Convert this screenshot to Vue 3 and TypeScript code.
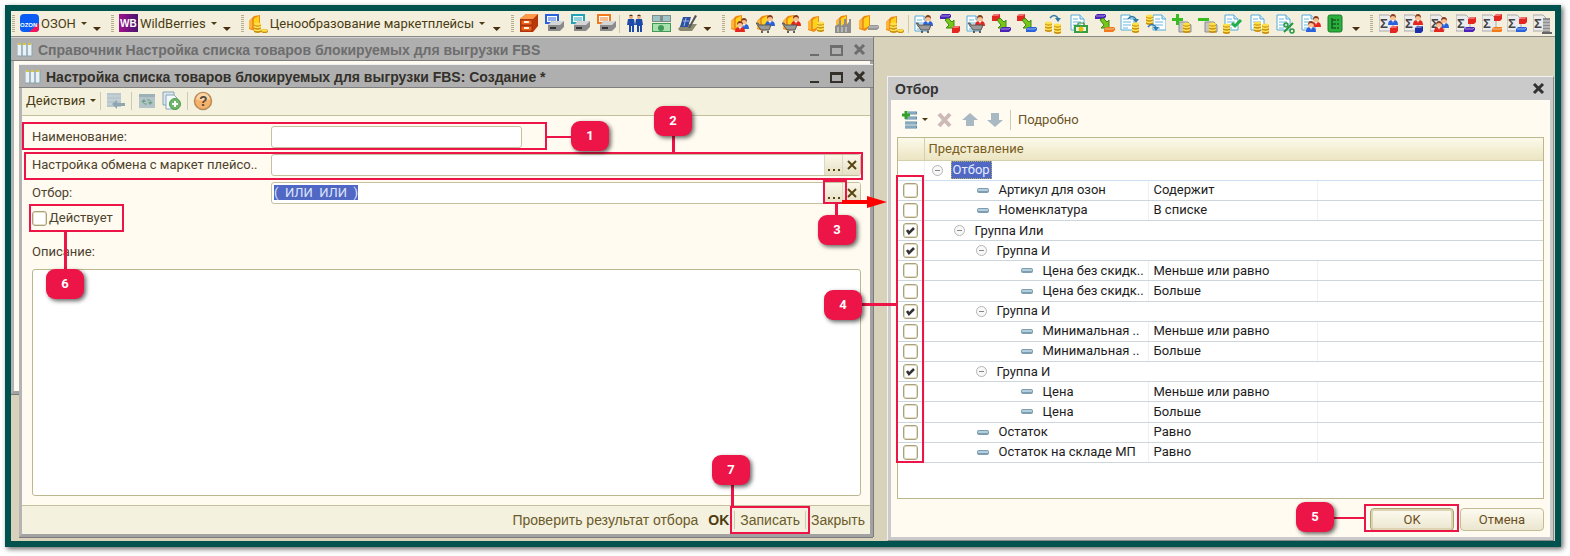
<script setup lang="ts">
import { ref } from 'vue'

// One piece of a toolbar icon: symbol name, x, y, optional colour name
type Part = [string, number, number, string?]
type Tool = { title: string; parts: Part[] } | 'sep'

const serviceTools: Tool[] = [
  { title: 'Архив', parts: [['cabinet', 0, 0]] },
  { title: 'Печать формы', parts: [['printer', 0, 0, 'blue']] },
  { title: 'Печать документа', parts: [['printer', 0, 0, 'teal']] },
  { title: 'Печать этикеток', parts: [['printer', 0, 0, 'orange']] },
  'sep',
  { title: 'Контрагенты', parts: [['standing', 1, 0], ['standing', 9, 0]] },
  { title: 'Касса', parts: [['money', 0, 0]] },
  { title: 'Отчётность', parts: [['pen', 0, 0]] },
]

const tradeTools: Tool[] = [
  { title: 'Товары и покупатели', parts: [['box', 1, 0], ['man', 9, 4, 'blue'], ['man', 5, 7, 'red']] },
  { title: 'Заказ поставщику', parts: [['box', 1, 0], ['man', 9, 1, 'blue'], ['cart', 0, 9]] },
  { title: 'Заказ покупателя', parts: [['box', 1, 0], ['man', 9, 1, 'red'], ['cart', 0, 9]] },
  { title: 'Цены товаров', parts: [['box', 0, 1], ['coins', 9, 7]] },
  { title: 'Склад', parts: [['box', 3, 0], ['factory', 2, 4]] },
  { title: 'Отгрузка', parts: [['box', 0, 0], ['bar', 9, 11, 'grey']] },
  { title: 'Себестоимость', parts: [['box', 1, 1], ['coins', 5, 8], ['coin', 12, 15]] },
  'sep',
  { title: 'Документ закупки', parts: [['sheet', 0, 1], ['man', 9, 1, 'blue'], ['cart', 2, 9]] },
  { title: 'Перемещение', parts: [['bar', 0, 0, 'purple'], ['arrow', 4, 4], ['cube', 12, 12, 'red']] },
  { title: 'Документ продажи', parts: [['sheet', 0, 1], ['man', 9, 1, 'red'], ['cart', 2, 9]] },
  { title: 'Поступление', parts: [['cube', 0, 0, 'red'], ['arrow', 4, 4], ['bar', 8, 13, 'purple']] },
  { title: 'Списание', parts: [['cube', 0, 0, 'red'], ['arrow', 4, 4], ['bar', 9, 13, 'blue']] },
  { title: 'Пересчёт', parts: [['coins', 2, 7], ['coins', 11, 9], ['turn', 7, 0]] },
  { title: 'Инкассация', parts: [['sheet', 1, 0, 'grey'], ['case', 5, 8]] },
  { title: 'Выгрузка', parts: [['bar', 0, 0, 'purple'], ['arrow', 4, 4], ['bar', 9, 13, 'orange']] },
  { title: 'Оплата', parts: [['sheet', 0, 0], ['turn', 8, 1], ['coins', 12, 8]] },
  { title: 'Возврат оплаты', parts: [['sheet', 6, 0], ['coins', 0, 0], ['turn', 2, 9]] },
  { title: 'Приход', parts: [['slab', 7, 6], ['coins', 11, 8], ['plus', 0, 0]] },
  { title: 'Расход', parts: [['slab', 7, 6], ['coins', 11, 8], ['minus', 0, 0]] },
  { title: 'Проведение', parts: [['sheet', 1, 0], ['coins', 0, 9], ['check', 9, 5]] },
  { title: 'Ведомость', parts: [['sheet', 1, 0], ['coins', 5, 7], ['coins', 13, 9]] },
  { title: 'Скидки', parts: [['sheet', 1, 0], ['percent', 8, 8]] },
  { title: 'Сотрудники', parts: [['sheet', 0, 0], ['man', 10, 2, 'red'], ['man', 5, 7, 'blue']] },
  { title: 'Структура', parts: [['book', 2, 1]] },
]

const reportTools: Tool[] = [
  { title: 'Итоги закупок', parts: [['sigma', 0, 1], ['man', 9, 0, 'blue'], ['cube', 11, 12, 'red']] },
  { title: 'Итоги продаж', parts: [['sigma', 0, 1], ['man', 9, 0, 'red'], ['cube', 11, 12, 'navy']] },
  { title: 'Итоги по персоналу', parts: [['sigma', 0, 1], ['man', 9, 3, 'blue'], ['man', 4, 7, 'red']] },
  { title: 'Итоги склада', parts: [['sigma', 0, 1], ['cube', 12, 3, 'red'], ['bar', 8, 13, 'purple']] },
  { title: 'Итоги отгрузок', parts: [['sigma', 0, 1], ['cube', 12, 0, 'red'], ['bar', 10, 13, 'orange']] },
  { title: 'Итоги возвратов', parts: [['sigma', 0, 1], ['cube', 12, 3, 'red'], ['bar', 9, 13, 'blue']] },
  { title: 'Итоги по хранению', parts: [['sigma', 0, 1], ['rack', 9, 4]] },
]

const iconGroups = [
  { name: 'Сервис', tools: serviceTools, more: true },
  { name: 'Торговля', tools: tradeTools, more: true },
  { name: 'Отчёты', tools: reportTools, more: false },
]

type Row = { kind: 'root' | 'group' | 'item'; level: number; text: string; cond?: string; on?: boolean }
const rows = ref<Row[]>([
  { kind: 'root', level: 0, text: 'Отбор' },
  { kind: 'item', level: 1, text: 'Артикул для озон', cond: 'Содержит', on: false },
  { kind: 'item', level: 1, text: 'Номенклатура', cond: 'В списке', on: false },
  { kind: 'group', level: 1, text: 'Группа Или', on: true },
  { kind: 'group', level: 2, text: 'Группа И', on: true },
  { kind: 'item', level: 3, text: 'Цена без скидк..', cond: 'Меньше или равно', on: false },
  { kind: 'item', level: 3, text: 'Цена без скидк..', cond: 'Больше', on: false },
  { kind: 'group', level: 2, text: 'Группа И', on: true },
  { kind: 'item', level: 3, text: 'Минимальная ..', cond: 'Меньше или равно', on: false },
  { kind: 'item', level: 3, text: 'Минимальная ..', cond: 'Больше', on: false },
  { kind: 'group', level: 2, text: 'Группа И', on: true },
  { kind: 'item', level: 3, text: 'Цена', cond: 'Меньше или равно', on: false },
  { kind: 'item', level: 3, text: 'Цена', cond: 'Больше', on: false },
  { kind: 'item', level: 1, text: 'Остаток', cond: 'Равно', on: false },
  { kind: 'item', level: 1, text: 'Остаток на складе МП', cond: 'Равно', on: false },
])

const title = ref('')
const exchange = ref('')
const active = ref(false)
const note = ref('')
</script>

<template>
  <div class="page">
    <svg class="symbols" width="0" height="0" aria-hidden="true">
      <defs>
        <g id="box">
          <path d="M0 7 5 2 11 1v12l-5 4-6-2z" fill="#f08a10" />
          <path d="M4 5 10 2v10l-6 3z" fill="#ffd21c" />
          <path d="M0 7 4 4v11l-4-1z" fill="#ffb53a" />
          <path d="M4 4v11" stroke="#d9660a" />
        </g>
        <g id="man">
          <path d="M0 11q0-5 4-5h2q4 0 4 5z" fill="currentColor" />
          <circle cx="5" cy="4" r="3" fill="#f6c193" />
          <path d="M2 4q0-4 3-4t3 4q-1-2-3-2T2 4z" fill="#8a3a1c" />
          <path d="M4 6h2l-1 3z" fill="#fff" />
        </g>
        <g id="cart">
          <path d="M0 0h2l1 2h12l-2 5H5z" fill="#9a9a9a" stroke="#555" />
          <circle cx="6" cy="9" r="1" fill="#333" /><circle cx="12" cy="9" r="1" fill="#333" />
        </g>
        <g id="coins">
          <path d="M0 2h7v8q-3 2-7 0z" fill="#c98e08" />
          <ellipse cx="3.500" cy="2" rx="3.500" ry="1.500" fill="#ffe04a" />
          <path d="M0 4.500q3.500 2 7 0M0 7.500q3.500 2 7 0" fill="none" stroke="#ffe45a" stroke-width="1.500" />
        </g>
        <g id="coin">
          <ellipse cx="3.500" cy="2" rx="3.500" ry="2" fill="#c98e08" /><ellipse cx="3.500" cy="1.500" rx="3" ry="1.200" fill="#ffe04a" />
        </g>
        <g id="factory">
          <path d="M0 15V8l4-2V2h2v6l3-2V1h2v6l3-3V1h2v14z" fill="#8d8d8d" />
          <path d="M3 9v5M7 9v5M11 9v5" stroke="#ddd" />
        </g>
        <g id="bar">
          <path d="M0 2 2 0h9v3L9 5H0z" fill="currentColor" />
          <path d="M1 2h8l2-2" fill="none" stroke="#fff" stroke-opacity=".5" />
        </g>
        <g id="cube">
          <path d="M0 2 2 0h6v5L6 7H0z" fill="currentColor" />
          <path d="M0 2 2 0h6L6 2z" fill="#fff" opacity=".35" />
        </g>
        <g id="arrow">
          <path d="M1 2 4 0l4 4 2-2v8H2l3-3z" fill="#78c51c" stroke="#3d8a10" />
        </g>
        <g id="sheet">
          <path d="M1 1h9l4 4v11H1z" fill="#fff" stroke="#57a9d8" />
          <path d="M10 1v4h4" fill="#cfeafa" stroke="#57a9d8" />
          <path d="M3 5h5M3 8h8M3 11h8M3 14h5" stroke="#67b7e0" />
        </g>
        <g id="turn">
          <path d="M0 4q4-5 8 0" fill="none" stroke="#2f79a8" stroke-width="1.500" />
          <path d="M5 4h6L8 8z" fill="#2f79a8" />
        </g>
        <g id="case">
          <path d="M0 3h14v8H0z" fill="#35a043" /><path d="M4 3V1h6v2" fill="none" stroke="#2a7d34" />
          <path d="M2 5h10v4H2z" fill="#e9f7df" /><circle cx="7" cy="7" r="2.500" fill="#f0b912" />
        </g>
        <g id="slab"><path d="M0 2h9l3 3v7H0z" fill="#c5c5c5" stroke="#8d8d8d" /></g>
        <g id="plus"><path d="M4 0h3v4h4v3H7v4H4V7H0V4h4z" fill="#35bd22" /></g>
        <g id="minus"><path d="M0 4h11v3H0z" fill="#35bd22" /></g>
        <g id="check"><path d="M0 4l3 3 6-6" fill="none" stroke="#1fae45" stroke-width="3" /></g>
        <g id="percent">
          <path d="M1 10 10 1" stroke="#26973b" stroke-width="2" />
          <circle cx="3" cy="3" r="2" fill="none" stroke="#26973b" stroke-width="1.500" />
          <circle cx="9" cy="9" r="2" fill="none" stroke="#26973b" stroke-width="1.500" />
        </g>
        <g id="book">
          <rect width="14" height="17" rx="2" fill="#2cae3d" stroke="#1a7d2a" />
          <path d="M4 3v10h4M4 5h4M4 9h4M9 5h2M9 9h2M9 13h2" fill="none" stroke="#145f22" stroke-width="1.500" />
        </g>
        <g id="sigma">
          <path d="M0 0h10l4 4v12H0z" fill="#ececec" stroke="#aaa" />
          <text x="1" y="13" class="sigma">Σ</text>
        </g>
        <g id="rack">
          <path d="M1 0h7v15H1z" fill="#8d8d8d" /><path d="M0 15h10" stroke="#666" stroke-width="2" />
          <path d="M1 3h7M1 6h7M1 9h7M1 12h7" stroke="#dedede" />
        </g>
        <g id="cabinet">
          <path d="M1 5 7 0h12v12l-5 6H1z" fill="#b8380c" />
          <path d="M1 5 7 0h12l-5 5z" fill="#ff9a4a" />
          <path d="M2 6h11v5H2zM2 12h11v5H2z" fill="#f0641e" stroke="#a5310a" />
          <path d="M5 8h5M5 14h5" stroke="#fff3d8" stroke-width="2" />
        </g>
        <g id="printer">
          <path d="M1 1h12v8H1z" fill="#fff" stroke="currentColor" stroke-width="2" />
          <path d="M3 4h8M3 6h8" stroke="currentColor" />
          <path d="M3 11 7 7h12v6l-4 4H3z" fill="#8b8b8b" />
          <path d="M3 11 7 7h12l-4 4z" fill="#d5d5d5" />
          <path d="M5 14h6" stroke="#333" stroke-width="2" />
        </g>
        <g id="standing">
          <circle cx="4" cy="3" r="2" fill="#e9a77a" /><path d="M2 2q2-3 4 0z" fill="#5a2c14" />
          <path d="M1 5h6l1 6H7v7H5v-6H4v6H2v-7H0z" fill="#1b4aa8" />
        </g>
        <g id="money">
          <path d="M0 1h19v7H0z" fill="#7d8f8a" /><path d="M1 2h7v5H1zM11 2h7v5h-7z" fill="#9fc4c8" />
          <path d="M0 9h19v9H0z" fill="#3f9a58" /><path d="M1 10h17v7H1z" fill="#a9e0ae" /><ellipse cx="9" cy="14" rx="3" ry="3" fill="#3f9a58" />
        </g>
        <g id="pen">
          <path d="M0 15 4 10h15l-5 7H2z" fill="#8a8a70" /><path d="M2 13 5 3h8l-3 10z" fill="#2c4fa0" />
          <path d="M5 7h6M8 4l-2 8" stroke="#9fb8f0" /><path d="M10 14 17 1l2 1-7 12z" fill="#555" />
        </g>
      </defs>
    </svg>

    <div class="frame">
      <nav class="topbar" aria-label="Панели инструментов">
        <div class="bargroup">
          <i class="grip"></i>
          <button class="textbtn">
            <svg width="20" height="19" viewBox="0 0 20 19" aria-hidden="true">
              <rect width="19" height="18" rx="4" fill="#0b5cf5" />
              <path d="M9 18 19 9v6q0 3-4 3z" fill="#f5145a" />
              <text x="0" y="13" class="ozon">OZON</text>
            </svg>
            <span>ОЗОН</span><i class="caret"></i>
          </button>
          <button class="more" title="Ещё"></button>
        </div>
        <div class="bargroup">
          <i class="grip"></i>
          <button class="textbtn">
            <svg width="20" height="19" viewBox="0 0 20 19" aria-hidden="true">
              <defs>
                <linearGradient id="wb"><stop stop-color="#a0128c" /><stop offset="1" stop-color="#4a1470" /></linearGradient>
              </defs>
              <rect width="19" height="18" fill="url(#wb)" />
              <text x="1" y="13" class="wb">WB</text>
            </svg>
            <span>WildBerries</span><i class="caret"></i>
          </button>
          <button class="more" title="Ещё"></button>
        </div>
        <div class="bargroup">
          <i class="grip"></i>
          <button class="textbtn">
            <svg width="20" height="20" viewBox="0 0 20 20" aria-hidden="true">
              <use href="#box" /><use href="#coins" x="5" y="8" /><use href="#coin" x="12" y="15" />
            </svg>
            <span>Ценообразование маркетплейсы</span><i class="caret"></i>
          </button>
          <button class="more" title="Ещё"></button>
        </div>
        <div v-for="g in iconGroups" :key="g.name" class="bargroup spread" role="group" :aria-label="g.name">
          <i class="grip"></i>
          <template v-for="(t, i) in g.tools" :key="i">
            <i v-if="t === 'sep'" class="barsep"></i>
            <button v-else class="iconbtn" :title="t.title">
              <svg width="20" height="20" viewBox="0 0 20 20" aria-hidden="true">
                <use v-for="(p, k) in t.parts" :key="k" :href="'#' + p[0]" :x="p[1]" :y="p[2]" :class="p[3]" />
              </svg>
            </button>
          </template>
          <button v-if="g.more" class="more" title="Ещё"></button>
        </div>
      </nav>

      <main class="desktop">
        <div class="stack">
          <section class="win back">
            <header class="wintitle">
              <svg class="tableicon" width="16" height="14" viewBox="0 0 16 14" aria-hidden="true">
                <path d="M0 0h5v13H0zM5 0h5v13H5zM10 0h5v13h-5z" fill="#e9f3f7" stroke="#8aa3b0" /><path d="M1 1h3M6 1h3M11 1h3" stroke="#d8c342" stroke-width="2" />
              </svg>
              <h2>Справочник Настройка списка товаров блокируемых для выгрузки FBS</h2>
              <div class="winctl">
                <button title="Свернуть"><svg width="14" height="12" viewBox="0 0 14 12"><path d="M3 11h9" /></svg></button>
                <button title="Развернуть"><svg width="14" height="12" viewBox="0 0 14 12"><path d="M1 2h11v9H1zM1 3h11" /></svg></button>
                <button title="Закрыть"><svg width="14" height="12" viewBox="0 0 14 12"><path class="cross" d="M2 1l9 9M11 1l-9 9" /></svg></button>
              </div>
            </header>
            <div class="blank"></div>
          </section>

          <section class="win front">
            <header class="wintitle">
              <svg class="tableicon" width="16" height="14" viewBox="0 0 16 14" aria-hidden="true">
                <path d="M0 0h5v13H0zM5 0h5v13H5zM10 0h5v13h-5z" fill="#e9f3f7" stroke="#8aa3b0" /><path d="M1 1h3M6 1h3M11 1h3" stroke="#d8c342" stroke-width="2" />
              </svg>
              <h2>Настройка списка товаров блокируемых для выгрузки FBS: Создание *</h2>
              <div class="winctl">
                <button title="Свернуть"><svg width="14" height="12" viewBox="0 0 14 12"><path d="M3 11h9" /></svg></button>
                <button title="Развернуть"><svg width="14" height="12" viewBox="0 0 14 12"><path d="M1 2h11v9H1zM1 3h11" /></svg></button>
                <button title="Закрыть"><svg width="14" height="12" viewBox="0 0 14 12"><path class="cross" d="M2 1l9 9M11 1l-9 9" /></svg></button>
              </div>
            </header>

            <div class="wintools">
              <button class="textbtn"><span>Действия</span><i class="caret"></i></button>
              <i class="barsep"></i>
              <button class="iconbtn" title="Найти в списке">
                <svg width="20" height="18" viewBox="0 0 20 18">
                  <path d="M1 1h14v14H1z" fill="#b9c6cd" /><path d="M1 4h14M1 8h14M1 12h14" stroke="#cfd8dc" />
                  <path d="M6 12l5-4v3h8v3h-8v3z" fill="#8fa5b0" />
                </svg>
              </button>
              <i class="barsep"></i>
              <button class="iconbtn" title="Обновить">
                <svg width="20" height="18" viewBox="0 0 20 18">
                  <path d="M2 2h16v14H2z" fill="#b3c3c9" /><path d="M2 2h16v3H2z" fill="#9db0b8" />
                  <path d="M4 10l3-3 2 3zM16 10l-3 3-2-3z" fill="#6fa282" /><path d="M6 10q1 3 4 2M14 10q-1-3-4-2" fill="none" stroke="#6fa282" />
                </svg>
              </button>
              <button class="iconbtn" title="Скопировать">
                <svg width="20" height="19" viewBox="0 0 20 19">
                  <path d="M1 1h11v13H1z" fill="#dbe7ee" stroke="#8ba5b5" /><path d="M4 4h8l3 3v11H4z" fill="#f3f8fb" stroke="#8ba5b5" />
                  <circle cx="13" cy="13" r="5.500" fill="#6fb869" stroke="#4f9a4b" /><path d="M10 13h6M13 10v6" stroke="#fff" stroke-width="2" />
                </svg>
              </button>
              <i class="barsep"></i>
              <button class="iconbtn" title="Справка">
                <svg width="20" height="20" viewBox="0 0 20 20">
                  <circle cx="10" cy="10" r="8.500" fill="#f6b26a" stroke="#b98a5a" stroke-width="1.500" /><path d="M3 8q2-6 7-6t7 6q-7 3-14 0z" fill="#fbd7a8" />
                  <text x="6" y="15" class="ask">?</text>
                </svg>
              </button>
            </div>

            <form class="form" @submit.prevent>
              <div class="field">
                <label for="f-name">Наименование:</label>
                <div class="box short"><input id="f-name" v-model="title" type="text" /></div>
              </div>
              <div class="field">
                <label for="f-exchange">Настройка обмена с маркет плейсо..</label>
                <div class="box">
                  <input id="f-exchange" v-model="exchange" type="text" />
                  <button type="button" class="inbtn dots" title="Выбрать"><i></i><i></i><i></i></button>
                  <button type="button" class="inbtn" title="Очистить"><svg width="10" height="10" viewBox="0 0 10 10"><path d="M1 1l8 8M9 1L1 9" /></svg></button>
                </div>
              </div>
              <div class="field">
                <label id="f-filter">Отбор:</label>
                <div class="box">
                  <output class="value" aria-labelledby="f-filter"><mark>(&nbsp; ИЛИ&nbsp; ИЛИ&nbsp; )</mark></output>
                  <button type="button" class="inbtn dots" title="Открыть отбор"><i></i><i></i><i></i></button>
                  <button type="button" class="inbtn" title="Очистить"><svg width="10" height="10" viewBox="0 0 10 10"><path d="M1 1l8 8M9 1L1 9" /></svg></button>
                </div>
              </div>
              <label class="active"><input v-model="active" type="checkbox" class="tick" /><span>Действует</span></label>
              <label class="notelabel" for="f-note">Описание:</label>
              <textarea id="f-note" v-model="note"></textarea>
            </form>

            <footer class="winfoot">
              <button>Проверить результат отбора</button>
              <button class="main">OK</button>
              <i class="barsep"></i>
              <button>Записать</button>
              <i class="barsep"></i>
              <button>Закрыть</button>
            </footer>

            <div class="ring r1"></div><i class="wire w1"></i><b class="badge b1">1</b>
            <div class="ring r2"></div><i class="wire w2"></i><b class="badge b2">2</b>
            <div class="ring r3"></div><i class="wire w3"></i><b class="badge b3">3</b>
            <svg class="pointer" width="45" height="12" viewBox="0 0 45 12" aria-hidden="true"><path d="M0 4h25V0l20 6-20 6V8H0z" fill="#f00" /></svg>
            <div class="ring r6"></div><i class="wire w6"></i><b class="badge b6">6</b>
            <div class="ring r7"></div><i class="wire w7"></i><b class="badge b7">7</b>
          </section>
        </div>

        <section class="dialog">
          <header class="dlgtitle">
            <h2>Отбор</h2>
            <button title="Закрыть"><svg width="14" height="12" viewBox="0 0 14 12"><path class="cross" d="M2 1l9 9M11 1l-9 9" /></svg></button>
          </header>
          <div class="dlgbody">
            <div class="dlgtools">
              <button class="iconbtn wide" title="Добавить">
                <svg width="18" height="18" viewBox="0 0 18 18">
                  <path d="M7 2h9M4 7h12M4 12h12M4 16h12" stroke="#5f8ba8" stroke-width="3" /><path d="M7 2h8M4 7h11M4 12h11M4 16h11" stroke="#a9c8da" />
                  <path d="M1 4h8M5 0v8" stroke="#35a02b" stroke-width="3" />
                </svg>
                <i class="caret"></i>
              </button>
              <button class="iconbtn" title="Удалить"><svg width="16" height="16" viewBox="0 0 16 16"><path d="M2 2l11 12M13 2L2 14" stroke="#ccb9b9" stroke-width="4" /></svg></button>
              <button class="iconbtn" title="Вверх"><svg width="16" height="16" viewBox="0 0 16 16"><path d="M8 1l8 7h-4v6H4V8H0z" fill="#a9b9c3" /></svg></button>
              <button class="iconbtn" title="Вниз"><svg width="16" height="16" viewBox="0 0 16 16"><path d="M8 15l8-7h-4V1H4v7H0z" fill="#a9b9c3" /></svg></button>
              <i class="barsep"></i>
              <button class="plain">Подробно</button>
            </div>
            <div class="tablebox">
              <table>
                <colgroup><col class="c1" /><col class="c2" /><col class="c3" /><col /></colgroup>
                <thead><tr><th></th><th colspan="3">Представление</th></tr></thead>
                <tbody>
                  <tr v-for="(r, i) in rows" :key="i" :class="r.kind">
                    <td class="tickcell"><input v-if="r.kind !== 'root'" v-model="r.on" type="checkbox" class="tick" :aria-label="r.text" /></td>
                    <td :colspan="r.kind === 'item' ? 1 : 3">
                      <div class="node" :class="'lv' + r.level">
                        <i v-if="r.kind === 'item'" class="dash"></i>
                        <button v-else class="fold" title="Свернуть ветвь"></button>
                        <span>{{ r.text }}</span>
                      </div>
                    </td>
                    <template v-if="r.kind === 'item'"><td class="cond">{{ r.cond }}</td><td></td></template>
                  </tr>
                </tbody>
              </table>
            </div>
            <div class="dlgfoot">
              <button class="push default">OK</button>
              <button class="push">Отмена</button>
            </div>
          </div>
          <div class="ring r4"></div><i class="wire w4"></i><b class="badge b4">4</b>
          <div class="ring r5"></div><i class="wire w5"></i><b class="badge b5">5</b>
        </section>
      </main>
    </div>
  </div>
</template>

<style>
body { margin: 0; background: #fff; }
</style>

<style scoped>
* { box-sizing: border-box; }
.page { display: flex; min-height: 100vh; padding: 5px 9px 9px 5px; font: 13px/16px Roboto, "Liberation Sans", sans-serif; color: #4a4030; }
.symbols { position: absolute; }
button { margin: 0; padding: 0; border: 0; background: none; color: inherit; font: inherit; white-space: nowrap; }
h2 { margin: 0; font: bold 14px/16px "Liberation Sans", sans-serif; white-space: nowrap; }
svg { display: block; flex: none; }
.frame { display: flex; flex: 1; flex-direction: column; min-width: 0; border: 6px solid #00524f; background: #d8d2bb; box-shadow: 2px 2px 5px rgba(0, 0, 0, .6); }

/* top toolbars */
.topbar { display: grid; grid-template-columns: 99fr 130fr 270fr 211fr 649fr 185fr; height: 26px; padding: 0 0 0 1px; border-bottom: 1px solid #8c8c86; background: #f3efdc; }
.bargroup { display: flex; align-items: center; min-width: 0; padding-right: 10px; }
.bargroup .textbtn { margin-left: 5px; }
.bargroup .textbtn + .more { margin-left: auto; }
.spread { justify-content: space-between; }
.bargroup:last-child { padding-right: 2px; }
.grip { flex: none; width: 3px; height: 17px; background: repeating-linear-gradient(#b5ad8c 0 1px, #f3efdc 1px 2px); }
.textbtn { display: flex; align-items: center; gap: 1px; color: #4a3c14; }
.caret { flex: none; width: 0; margin-left: 4px; border: 3px solid transparent; border-top-color: #4a3c14; border-bottom: 0; }
.more { flex: none; align-self: flex-end; width: 8px; height: 4px; margin-bottom: 5px; background: #4a3010; clip-path: polygon(0 0, 100% 0, 50% 100%); }
.iconbtn { display: flex; align-items: center; flex: none; }
.barsep { flex: none; width: 1px; height: 18px; background: #cfc9ae; }
.spread .barsep { margin: 0 0 0 -3px; }
.ozon { font: bold 6px "Liberation Sans", sans-serif; fill: #fff; }
.wb { font: bold 10px "Liberation Sans", sans-serif; fill: #fff; }
.sigma { font: bold 13px "Liberation Sans", sans-serif; fill: #444; }
.ask { font: bold 14px "Liberation Sans", sans-serif; fill: #5a4a40; }
.red { color: #e3261f; }
.blue { color: #2a62dc; }
.navy { color: #1b2fa8; }
.purple { color: #4a22b8; }
.orange { color: #f07a1c; }
.teal { color: #22a4b8; }
.grey { color: #969696; }

/* windows */
.desktop { display: grid; flex: 1; grid-template-columns: 862fr 667fr; gap: 14px; padding-right: 1px; }
.stack { display: grid; min-width: 0; }
.win { position: relative; display: flex; flex-direction: column; grid-area: 1 / 1; min-width: 0; border: 3px solid #a2a2a2; border-top: 0; border-left-color: #b4b4b4; box-shadow: inset 1px 0 #858585, 0 1px #7b7b7b, 1px 0 #7b7b7b; background: #fffbf0; }
.back { margin-bottom: 147px; color: #6d6d6d; }
.front { margin: 27px 0 4px 8px; color: #33302a; }
.wintitle { display: flex; align-items: center; height: 24px; margin: 0 -3px; padding: 1px 6px 0 6px; border-top: 1px solid #d2d2d2; border-bottom: 1px solid #7f7f7f; background: #afafaf; }
.front .wintitle { border-top-color: #eee; }
.tableicon { margin-right: 5px; }
.winctl { display: flex; gap: 9px; margin-left: auto; }
.winctl path, .dlgtitle path { fill: none; stroke: currentColor; stroke-width: 2; }
.winctl .cross, .dlgtitle .cross { stroke-width: 3; }
.blank { flex: 1; background: #fffbf0; }
.wintools { display: flex; align-items: center; gap: 5px; height: 28px; padding: 0 0 2px 4px; border-bottom: 1px solid #c6bf9c; background: #f4f1de; }
.wintools .textbtn { margin-right: -1px; }
.form { display: flex; flex: 1; flex-direction: column; gap: 6px; padding: 10px 9px 9px 10px; background: #fffbf0; color: #4d422e; }
.field { display: grid; grid-template-columns: 239px 1fr; align-items: center; }
.box { display: flex; height: 22px; overflow: hidden; border: 1px solid #c6c0a0; border-radius: 3px; background: #fff; }
.short { width: 251px; }
.box input { flex: 1; min-width: 0; padding: 0 4px; border: 0; background: none; font: inherit; outline: 0; }
.value { flex: 1; padding: 2px; }
mark { display: inline-block; background: #5068c4; color: #dfe5fb; font: 13px/15px Roboto, sans-serif; }
.inbtn { display: flex; align-items: center; justify-content: center; flex: none; width: 18px; border-left: 1px solid #dcd7bd; background: linear-gradient(#fbf8ea, #e5dfc4); }
.inbtn path { fill: none; stroke: #5a4510; stroke-width: 2; }
.dots { align-items: flex-end; gap: 3px; padding-bottom: 4px; }
.dots i { width: 2px; height: 2px; background: #5a4510; }
.active { display: flex; align-items: center; gap: 2px; align-self: flex-start; }
.tick { flex: none; width: 15px; height: 15px; margin: 0; border: 1px solid #aaa17c; border-radius: 3px; background: #fff; box-shadow: 0 0 0 1px #e3dec8 inset; appearance: none; }
.tick:checked { background: #fff url("data:image/svg+xml,%3Csvg xmlns='http://www.w3.org/2000/svg' viewBox='0 0 13 13'%3E%3Cpath d='M3 6l2 3 5-5' fill='none' stroke='%23333' stroke-width='2.500'/%3E%3C/svg%3E") center / 13px; }
.notelabel { margin: 12px 0 3px; }
textarea { flex: 1; min-height: 120px; resize: none; border: 1px solid #bdb78f; border-radius: 3px; background: #fff; font: inherit; outline: 0; }
.winfoot { display: flex; align-items: center; justify-content: flex-end; gap: 5px; height: 29px; padding-right: 5px; border-top: 1px solid #c6bf9c; background: #f4f1de; color: #6b5a2a; font: 14px/16px "Liberation Sans", sans-serif; }
.main { margin-left: 5px; color: #4a3c10; font-weight: bold; }

/* filter dialog */
.dialog { position: relative; display: flex; flex-direction: column; min-width: 0; margin-top: 39px; border: 1px solid #f2f2f2; border-right-color: #8a8a8a; border-bottom-color: #8a8a8a; background: #cacaca; }
.dlgtitle { display: flex; align-items: center; justify-content: space-between; height: 23px; padding: 0 7px; color: #333; }
.dlgbody { display: flex; flex: 1; flex-direction: column; margin: 0 3px 3px; padding: 2px 6px 6px; background: #fffbf0; }
.dlgtools { display: flex; align-items: center; gap: 9px; height: 35px; padding-left: 4px; color: #6b5426; }
.wide .caret { margin-left: 3px; }
.dlgtools .barsep { height: 20px; margin: 0 -2px; }
.tablebox { flex: 1; border: 1px solid #bdb78f; background: #fff; }
table { width: 100%; height: 325px; border-collapse: collapse; table-layout: fixed; color: #1c1c22; }
.c1 { width: 26px; }
.c2 { width: 224px; }
.c3 { width: 169px; }
th { height: 22px; padding: 0 4px; border: 1px solid #d6cfac; border-width: 0 0 1px 1px; background: linear-gradient(#fbf9ea, #ece5c2); color: #7a5c20; font-weight: normal; text-align: left; }
th:first-child { border-left: 0; }
td { height: 20px; padding: 0; border-bottom: 1px solid #cdd6da; }
td + td { border-left: 1px solid #eef0f2; }
.root td { border-bottom-color: #cfe0f2; }
.tickcell { text-align: center; line-height: 0; }
.tickcell .tick { vertical-align: middle; }
.node { display: flex; align-items: center; overflow: hidden; white-space: nowrap; line-height: 18px; }
.cond { padding-left: 5px; }
.lv0 { padding-left: 7px; }
.lv1 { padding-left: 29px; }
.lv2 { padding-left: 51px; }
.item .lv1 { padding-left: 52px; }
.item .lv3 { padding-left: 96px; }
.fold { position: relative; flex: none; width: 11px; height: 11px; margin-right: 10px; border: 1px solid #b5b5b5; border-radius: 50%; background: linear-gradient(#888, #888) center / 5px 1px no-repeat #f8f8f8; }
.lv0 .fold { margin-right: 8px; }
.lv0 span { padding: 0 2px; outline: 1px dotted #b5b060; outline-offset: -1px; background: #5068c4; color: #e6ebff; }
.dash { flex: none; width: 12px; height: 5px; margin-right: 10px; border: 1px solid #7d9db1; border-bottom-width: 2px; border-radius: 2px; background: #b5cedb; }
.dlgfoot { display: flex; justify-content: flex-end; gap: 6px; margin-top: 9px; }
.push { width: 84px; height: 23px; border: 1px solid #c2bb95; border-radius: 4px; background: linear-gradient(#fdfbf1, #ebe6cf); color: #6b4f1c; }
.default { box-shadow: 0 0 0 2px #ddd5b2 inset; border-color: #a89f74; }

/* callouts laid over the windows */
.ring { position: absolute; border: 2px solid #ed1548; pointer-events: none; }
.wire { position: absolute; background: #ed1548; }
.badge { position: absolute; z-index: 2; width: 38px; height: 30px; border-radius: 9px; background: #ed1548; box-shadow: 2px 2px 4px rgba(0, 0, 0, .6); color: #fff; font: bold 13px/30px Roboto, sans-serif; text-align: center; }
.pointer { position: absolute; z-index: 2; top: 132px; right: -17px; }
.r1 { left: 0; top: 58px; width: 525px; height: 28px; }
.w1 { left: 525px; top: 72px; width: 24px; height: 2px; }
.b1 { left: 549px; top: 57px; }
.r2 { left: 2px; right: 7px; top: 88px; height: 28px; }
.w2 { right: 195px; top: 72px; width: 3px; height: 16px; }
.b2 { right: 178px; top: 42px; }
.r3 { right: 23px; top: 116px; width: 24px; height: 24px; }
.w3 { right: 32px; top: 140px; width: 3px; height: 12px; }
.b3 { right: 14px; top: 151px; }
.r6 { left: 7px; top: 140px; width: 95px; height: 28px; }
.w6 { left: 42px; top: 168px; width: 3px; height: 38px; }
.b6 { left: 24px; top: 205px; }
.r7 { right: 60px; bottom: 0; width: 80px; height: 28px; }
.w7 { right: 136px; bottom: 28px; width: 3px; height: 22px; }
.b7 { right: 120px; bottom: 49px; }
.r4 { left: 8px; top: 98px; width: 28px; height: 288px; }
.w4 { left: -27px; top: 226px; width: 35px; height: 3px; }
.b4 { left: -64px; top: 213px; }
.r5 { right: 94px; bottom: 8px; width: 95px; height: 28px; }
.w5 { right: 189px; bottom: 21px; width: 30px; height: 2px; }
.b5 { right: 219px; bottom: 8px; }
</style>
